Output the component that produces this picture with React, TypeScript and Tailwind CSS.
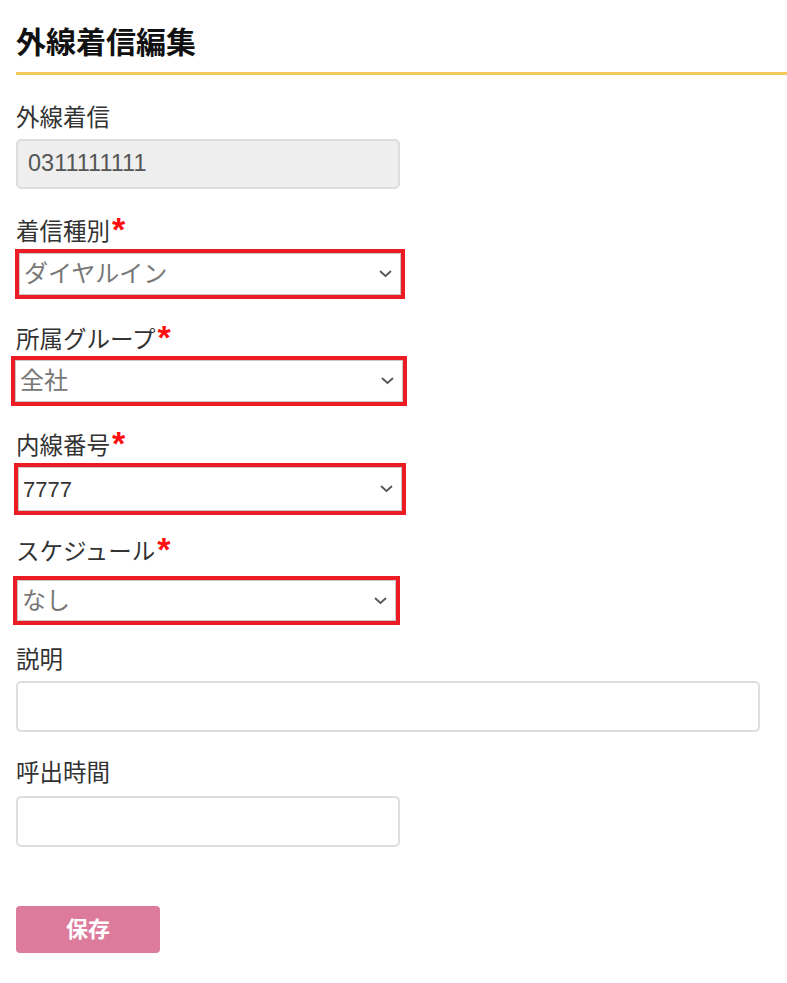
import React from 'react'

const font = "font-['Liberation_Sans','Noto_Sans_CJK_JP',sans-serif]"

const Chevron = () => (
  <svg width="13" height="8" viewBox="0 0 13 8" fill="none" className="shrink-0">
    <path d="M1.5 1.5 L6.5 6 L11.5 1.5" stroke="#555" strokeWidth="1.8" strokeLinecap="round" />
  </svg>
)

const Label = ({ text, required, className }: { text: string; required?: boolean; className: string }) => (
  <div className={`flex items-center h-[30px] text-[23.5px] leading-[30px] text-[#333] ${className}`}>
    <span>{text}</span>
    {required && <span className="ml-[2px] -mt-[6px] text-[34px] font-bold leading-none text-[#ff1010]">*</span>}
  </div>
)

const MarkedSelect = ({ value, dark, className }: { value: string; dark?: boolean; className: string }) => (
  <div className={`border-[4px] border-[#ec1c24] ${className}`}>
    <div className="flex h-full items-center justify-between border border-[#c8c8c8] bg-white pl-[4px] pr-[8px]">
      <span className={dark ? 'text-[22px] text-[#333]' : 'text-[24px] text-[#777]'}>{value}</span>
      <Chevron />
    </div>
  </div>
)

const App = () => {
  return (
    <div className={`min-h-[983px] bg-white pl-[16px] pt-[23px] ${font}`}>
      <h1 className="border-b-[3px] border-[#f5c85a] pb-[9px] text-[30px] font-bold leading-[40px] text-[#111]">
        外線着信編集
      </h1>
      <div className="flex flex-col">
        <Label text="外線着信" className="mt-[28px]" />
        <div className="mt-[6px] flex h-[50px] w-[384px] items-center rounded-[5px] border-2 border-[#dedede] bg-[#eeeeee] px-[10px] text-[23.5px] text-[#555]">
          0311111111
        </div>

        <Label text="着信種別" required className="mt-[28px]" />
        <MarkedSelect value="ダイヤルイン" className="mt-[2px] ml-[-1px] h-[50px] w-[390px]" />

        <Label text="所属グループ" required className="mt-[26px]" />
        <MarkedSelect value="全社" className="mt-[1px] ml-[-5px] h-[50px] w-[396px]" />

        <Label text="内線番号" required className="mt-[25px]" />
        <MarkedSelect value="7777" dark className="mt-[2px] ml-[-2px] h-[52px] w-[392px]" />

        <Label text="スケジュール" required className="mt-[22px]" />
        <MarkedSelect value="なし" className="mt-[9px] ml-[-3px] h-[49px] w-[387px]" />

        <Label text="説明" className="mt-[20px]" />
        <div className="mt-[6px] h-[51px] w-[744px] rounded-[5px] border-2 border-[#dedede] bg-white" />

        <Label text="呼出時間" className="mt-[26px]" />
        <div className="mt-[8px] h-[51px] w-[384px] rounded-[5px] border-2 border-[#dedede] bg-white" />

        <button className="mt-[59px] flex h-[47px] w-[144px] items-center justify-center rounded-[4px] bg-[#dc7b9c] text-[22px] font-bold text-white">
          保存
        </button>
      </div>
    </div>
  )
}

export default App
